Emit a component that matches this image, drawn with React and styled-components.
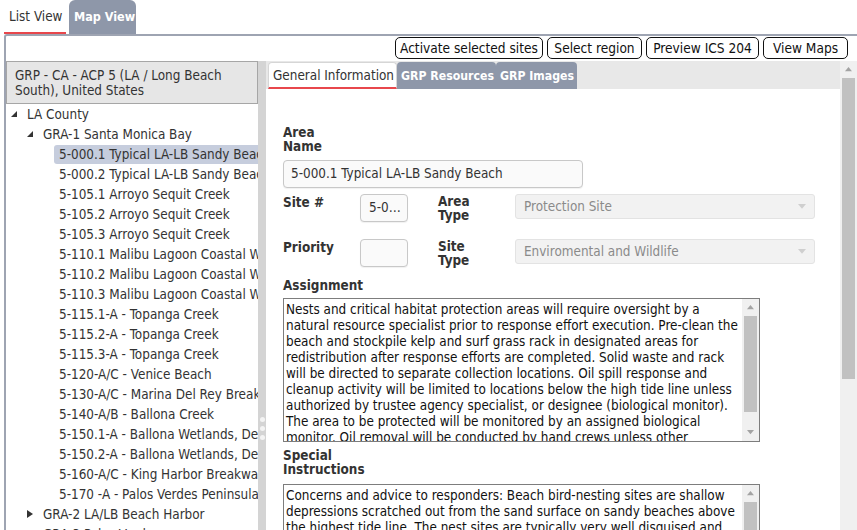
import React from 'react';
import styled, { createGlobalStyle } from 'styled-components';

const FONT = '"DejaVu Sans Condensed", "DejaVu Sans", Verdana, sans-serif';
const SLATE = '#8e97a9';
const RED = '#e8474c';

const GlobalStyle = createGlobalStyle`
  html, body { margin: 0; padding: 0; background: #fff; overflow: hidden; }
  body { font-family: ${FONT}; font-size: 13.4px; color: #333; }
  * { box-sizing: border-box; }
`;

const Page = styled.div`
  width: 857px;
  height: 530px;
  overflow: hidden;
  display: flex;
  flex-direction: column;
`;

const ViewTabs = styled.div`
  display: flex;
  gap: 3px;
  height: 34px;
  padding-left: 4px;
  flex-shrink: 0;
`;

const ViewTab = styled.div`
  height: 34px;
  width: ${p => p.$w}px;
  padding: 0 0 0 5px;
  display: flex;
  align-items: center;
  white-space: nowrap;
  border-radius: 6px 6px 0 0;
  background: ${p => (p.$active ? '#fff' : SLATE)};
  color: ${p => (p.$active ? '#333' : '#fff')};
  font-weight: ${p => (p.$active ? 'normal' : 'bold')};
  font-size: ${p => (p.$active ? '13.4px' : '12.5px')};
  border-bottom: 2px solid ${p => (p.$active ? RED : SLATE)};
`;

const Panel = styled.div`
  flex: 1;
  margin-left: 4px;
  border-top: 2px solid #9ea4b2;
  border-left: 2px solid #9ea4b2;
  border-top-left-radius: 3px;
  display: flex;
  flex-direction: column;
  min-height: 0;
`;

const Toolbar = styled.div`
  display: flex;
  justify-content: flex-end;
  gap: 4px;
  height: 25px;
  padding: 1px 9px 0 0;
  flex-shrink: 0;
`;

const Button = styled.button`
  height: 22px;
  width: ${p => p.$w}px;
  padding: 0;
  background: #fff;
  border: 1px solid #111;
  border-radius: 5px;
  font-family: ${FONT};
  font-size: 13.6px;
  color: #111;
`;

const Body = styled.div`
  flex: 1;
  display: flex;
  min-height: 0;
`;

const LeftPane = styled.div`
  width: 252px;
  flex-shrink: 0;
  display: flex;
  flex-direction: column;
  overflow: hidden;
`;

const PaneHeader = styled.div`
  height: 43px;
  flex-shrink: 0;
  background: #e6e6e6;
  border: 1px solid #a6a6a6;
  padding: 6px 8px 0;
  line-height: 15px;
`;

const Tree = styled.div`
  white-space: nowrap;
  overflow: hidden;
`;

const TreeRow = styled.div`
  display: flex;
  align-items: center;
  height: 20px;
  padding-left: ${p => p.$level * 16}px;
`;

const Toggle = styled.span`
  width: 16px;
  height: 20px;
  flex-shrink: 0;
  display: flex;
  align-items: center;
  justify-content: center;
`;

const NodeLabel = styled.span`
  height: 19px;
  line-height: 19px;
  padding: 0 5px;
  border-radius: 3px;
  background: ${p => (p.$selected ? '#c6cddd' : 'transparent')};
  flex: ${p => (p.$selected ? 1 : 'none')};
`;

const Splitter = styled.div`
  width: 8px;
  flex-shrink: 0;
  background: #d4d4d4;
  display: flex;
  flex-direction: column;
  align-items: center;
  gap: 4px;
  padding-top: 356px;
`;

const Grip = styled.span`
  width: 5px;
  height: 5px;
  border-radius: 50%;
  background: #f4f4f4;
`;

const RightPane = styled.div`
  flex: 1;
  display: flex;
  min-width: 0;
`;

const RightMain = styled.div`
  flex: 1;
  display: flex;
  flex-direction: column;
  min-width: 0;
`;

const DetailTabs = styled.div`
  height: 28px;
  flex-shrink: 0;
  background: #e8e8e8;
  padding: 1px 0 0 2px;
  display: flex;
  align-items: flex-end;
`;

const DetailTab = styled.div`
  height: 27px;
  width: ${p => p.$w}px;
  padding: 0 4px;
  display: flex;
  align-items: center;
  white-space: nowrap;
  border-radius: 4px 4px 0 0;
  background: ${p => (p.$active ? '#fff' : SLATE)};
  color: ${p => (p.$active ? '#333' : '#fff')};
  font-weight: ${p => (p.$active ? 'normal' : 'bold')};
  font-size: ${p => (p.$active ? '13.4px' : '12.2px')};
  border: ${p => (p.$active ? '1px solid #d6d6d6' : 'none')};
  border-bottom: ${p => (p.$active ? `2px solid ${RED}` : 'none')};
`;

const Form = styled.div`
  padding: 37px 0 0 17px;
`;

const Label = styled.div`
  font-weight: bold;
  line-height: 14px;
  color: #333;
  padding-top: ${p => p.$pt || 0}px;
`;

const TextInput = styled.div`
  height: 28px;
  width: ${p => p.$w}px;
  margin-top: ${p => p.$mt || 0}px;
  border: 1px solid #c8c8c8;
  border-radius: 4px;
  background: #fafafa;
  box-shadow: 0 1px 1px rgba(0, 0, 0, 0.06);
  padding: 0 ${p => (p.$narrow ? 1 : 7)}px 0 ${p => (p.$narrow ? 8 : 7)}px;
  line-height: 26px;
  white-space: nowrap;
  overflow: hidden;
  text-overflow: ellipsis;
  color: #333;
`;

const FieldGrid = styled.div`
  display: grid;
  grid-template-columns: 77px 78px 77px 300px;
  grid-auto-rows: 28px;
  row-gap: 17px;
  margin-top: 6px;
`;

const Select = styled.div`
  height: 25px;
  border: 1px solid #e3e3e3;
  border-radius: 3px;
  background: #f2f2f2;
  color: #8a8a8a;
  padding: 0 8px;
  display: flex;
  align-items: center;
  justify-content: space-between;
`;

const Section = styled.div`
  margin-top: ${p => p.$mt}px;
`;

const TextArea = styled.div`
  width: 477px;
  height: 144px;
  margin-top: ${p => p.$mt}px;
  border: 1px solid #7d7d7d;
  display: flex;
  background: #fff;
`;

const TextLines = styled.div`
  flex: 1;
  padding: 3px 2px 0 2px;
  line-height: 16px;
  color: #111;
  white-space: nowrap;
  overflow: hidden;
`;

const ScrollBar = styled.div`
  width: 17px;
  flex-shrink: 0;
  background: #f0f0f0;
  display: flex;
  flex-direction: column;
  align-items: center;
`;

const ScrollArrow = styled.div`
  height: 17px;
  width: 17px;
  display: flex;
  align-items: center;
  justify-content: center;
  flex-shrink: 0;
`;

const Thumb = styled.div`
  width: 13px;
  height: ${p => p.$h}px;
  background: #c1c1c1;
  flex-shrink: 0;
`;

const Spacer = styled.div`
  flex: 1;
`;

const Tri = ({ dir = 'down', color = '#a3a3a3', size = 7 }) => (
  <svg width={size} height={size * 0.6} viewBox="0 0 10 6">
    {dir === 'down' ? <path d="M0 0 L10 0 L5 6 Z" fill={color} /> : <path d="M0 6 L10 6 L5 0 Z" fill={color} />}
  </svg>
);

const Expanded = () => (
  <svg width="6" height="6" viewBox="0 0 6 6">
    <path d="M6 0 L6 6 L0 6 Z" fill="#333" />
  </svg>
);

const Collapsed = () => (
  <svg width="6" height="8" viewBox="0 0 6 8">
    <path d="M0 0 L6 4 L0 8 Z" fill="#333" />
  </svg>
);

const sites = [
  '5-000.1 Typical LA-LB Sandy Beach',
  '5-000.2 Typical LA-LB Sandy Beach',
  '5-105.1 Arroyo Sequit Creek',
  '5-105.2 Arroyo Sequit Creek',
  '5-105.3 Arroyo Sequit Creek',
  '5-110.1 Malibu Lagoon Coastal Wetlands',
  '5-110.2 Malibu Lagoon Coastal Wetlands',
  '5-110.3 Malibu Lagoon Coastal Wetlands',
  '5-115.1-A - Topanga Creek',
  '5-115.2-A - Topanga Creek',
  '5-115.3-A - Topanga Creek',
  '5-120-A/C - Venice Beach',
  '5-130-A/C - Marina Del Rey Breakwater',
  '5-140-A/B - Ballona Creek',
  '5-150.1-A - Ballona Wetlands, Del Rey Lagoon',
  '5-150.2-A - Ballona Wetlands, Del Rey Lagoon',
  '5-160-A/C - King Harbor Breakwater',
  '5-170 -A - Palos Verdes Peninsula',
];

const assignment = [
  'Nests and critical habitat protection areas will require oversight by a',
  'natural resource specialist prior to response effort execution. Pre-clean the',
  'beach and stockpile kelp and surf grass rack in designated areas for',
  'redistribution after response efforts are completed. Solid waste and rack',
  'will be directed to separate collection locations. Oil spill response and',
  'cleanup activity will be limited to locations below the high tide line unless',
  'authorized by trustee agency specialist, or designee (biological monitor).',
  'The area to be protected will be monitored by an assigned biological',
  'monitor. Oil removal will be conducted by hand crews unless other',
];

const instructions = [
  'Concerns and advice to responders: Beach bird-nesting sites are shallow',
  'depressions scratched out from the sand surface on sandy beaches above',
  'the highest tide line. The nest sites are typically very well disguised and',
  'difficult to see.',
];

function FakeScroll({ thumbH, downArrow = true }) {
  return (
    <ScrollBar>
      <ScrollArrow><Tri dir="up" /></ScrollArrow>
      <Thumb $h={thumbH} />
      <Spacer />
      {downArrow && <ScrollArrow><Tri dir="down" /></ScrollArrow>}
    </ScrollBar>
  );
}

export default function App() {
  return (
    <Page>
      <GlobalStyle />
      <ViewTabs>
        <ViewTab $active $w={62}>List View</ViewTab>
        <ViewTab $w={67}>Map View</ViewTab>
      </ViewTabs>
      <Panel>
        <Toolbar>
          <Button $w={148}>Activate selected sites</Button>
          <Button $w={95}>Select region</Button>
          <Button $w={113}>Preview ICS 204</Button>
          <Button $w={85}>View Maps</Button>
        </Toolbar>
        <Body>
          <LeftPane>
            <PaneHeader>
              GRP - CA - ACP 5 (LA / Long Beach
              <br />
              South), United States
            </PaneHeader>
            <Tree>
              <TreeRow $level={0}>
                <Toggle><Expanded /></Toggle>
                <NodeLabel>LA County</NodeLabel>
              </TreeRow>
              <TreeRow $level={1}>
                <Toggle><Expanded /></Toggle>
                <NodeLabel>GRA-1 Santa Monica Bay</NodeLabel>
              </TreeRow>
              {sites.map((s, i) => (
                <TreeRow key={s} $level={2}>
                  <Toggle />
                  <NodeLabel $selected={i === 0}>{s}</NodeLabel>
                </TreeRow>
              ))}
              <TreeRow $level={1}>
                <Toggle><Collapsed /></Toggle>
                <NodeLabel>GRA-2 LA/LB Beach Harbor</NodeLabel>
              </TreeRow>
              <TreeRow $level={1}>
                <Toggle><Collapsed /></Toggle>
                <NodeLabel>GRA-3 Palos Verdes</NodeLabel>
              </TreeRow>
            </Tree>
          </LeftPane>
          <Splitter>
            <Grip />
            <Grip />
            <Grip />
          </Splitter>
          <RightPane>
            <RightMain>
              <DetailTabs>
                <DetailTab $active $w={129}>General Information</DetailTab>
                <DetailTab $w={99}>GRP Resources</DetailTab>
                <DetailTab $w={81}>GRP Images</DetailTab>
              </DetailTabs>
              <Form>
                <Label>Area<br />Name</Label>
                <TextInput $w={300} $mt={6}>5-000.1 Typical LA-LB Sandy Beach</TextInput>
                <FieldGrid>
                  <Label $pt={2}>Site #</Label>
                  <TextInput $w={48} $narrow>5-000.1</TextInput>
                  <Label $pt={1}>Area<br />Type</Label>
                  <Select>Protection Site<Tri color="#cfcfcf" size={8} /></Select>
                  <Label $pt={2}>Priority</Label>
                  <TextInput $w={48} $narrow />
                  <Label $pt={1}>Site<br />Type</Label>
                  <Select>Enviromental and Wildlife<Tri color="#cfcfcf" size={8} /></Select>
                </FieldGrid>
                <Section $mt={12}>
                  <Label>Assignment</Label>
                  <TextArea $mt={5}>
                    <TextLines>
                      {assignment.map(l => <div key={l}>{l}</div>)}
                    </TextLines>
                    <FakeScroll thumbH={96} />
                  </TextArea>
                </Section>
                <Section $mt={7}>
                  <Label>Special<br />Instructions</Label>
                  <TextArea $mt={7}>
                    <TextLines>
                      {instructions.map(l => <div key={l}>{l}</div>)}
                    </TextLines>
                    <FakeScroll thumbH={96} />
                  </TextArea>
                </Section>
              </Form>
            </RightMain>
            <FakeScroll thumbH={301} downArrow={false} />
          </RightPane>
        </Body>
      </Panel>
    </Page>
  );
}
